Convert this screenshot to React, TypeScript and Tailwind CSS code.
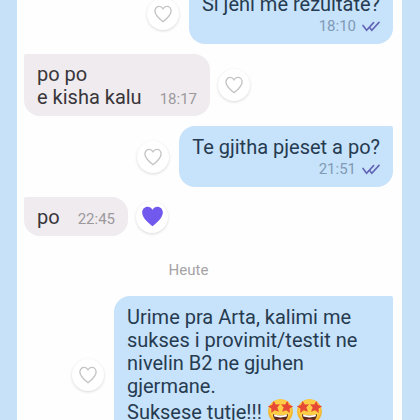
import type { ReactNode } from 'react';

const HEART =
  'M12 20.5C10.4 19.1 3 14 3 8.6 3 5.6 5.2 3.6 7.7 3.6c1.8 0 3.4 1 4.3 2.6.9-1.6 2.5-2.6 4.3-2.6C18.8 3.6 21 5.6 21 8.6c0 5.4-7.4 10.5-9 11.9z';

function LikeButton({ liked = false }: { liked?: boolean }) {
  return (
    <button
      type="button"
      aria-label="Like"
      aria-pressed={liked}
      className="flex size-8 shrink-0 items-center justify-center rounded-full bg-white shadow-[0_1px_3px_rgba(0,0,0,0.15)]"
    >
      {liked ? (
        <svg viewBox="2 2 20 20" className="size-[23px]" fill="#7259ee" aria-hidden="true">
          <path d={HEART} />
        </svg>
      ) : (
        <svg viewBox="2 2 20 20" className="size-[18px]" fill="none" stroke="#c4c2c5" strokeWidth="1.5" aria-hidden="true">
          <path d={HEART} />
        </svg>
      )}
    </button>
  );
}

function SeenTicks() {
  return (
    <svg viewBox="0 0 18 11" className="h-[11px] w-[18px]" fill="none" stroke="#6264b5" strokeWidth="1.6" strokeLinecap="round" aria-hidden="true">
      <path d="M1 4.4 4.6 9.2 11.6 1.6" />
      <path d="M7.6 6.6 9.8 9.2 17 1.4" />
    </svg>
  );
}

function StarFace() {
  return (
    <svg viewBox="0 0 28 28" className="inline-block size-[27px] align-[-6px]" role="img" aria-label="Star-struck">
      <circle cx="14" cy="14" r="12.8" fill="#f5b52c" />
      <circle cx="14" cy="12.8" r="11.4" fill="#fdce45" />
      <path d="M6.2 16.8c4.8 1.7 10.8 1.7 15.6 0 .2 4.6-3.2 8-7.8 8s-8-3.4-7.8-8z" fill="#5b2b20" />
      <path d="M7.2 17.1c4.3 1.3 9.3 1.3 13.6 0l-.4 2.2c-4.2 1.1-8.6 1.1-12.8 0z" fill="#fff" />
      <path d="M9.8 23.2c2-2 6.4-2 8.4 0-2.3 1.7-6.1 1.7-8.4 0z" fill="#e35d4f" />
      <path d="m7 3 2.1 3.7 4.4-.3-2.8 3.5 1.7 4.3-4.3-1.4-3.6 2.8v-4.6L.8 8.5l4.4-1.2z" fill="#e64a35" />
      <path d="m21 3-2.1 3.7-4.4-.3 2.8 3.5-1.7 4.3 4.3-1.4 3.6 2.8v-4.6l3.7-2.5-4.4-1.2z" fill="#e64a35" />
    </svg>
  );
}

function Received({ time, liked, children }: { time: string; liked?: boolean; children: ReactNode }) {
  return (
    <article className="flex items-center gap-2">
      <div className="flex items-end gap-[18px] rounded-2xl rounded-tl-xs bg-[#efebee] px-[13px] pt-[9px] pb-[7px] text-[#39363b]">
        <p>{children}</p>
        <time className="text-[15px] leading-5 text-[#9c999d]">{time}</time>
      </div>
      <LikeButton liked={liked} />
    </article>
  );
}

function Sent({ time, children }: { time?: string; children: ReactNode }) {
  return (
    <article className="flex items-center justify-end gap-[10px]">
      <LikeButton />
      <div className="max-w-[279px] rounded-2xl rounded-tr-xs bg-[#c7e2fb] px-[13px] pt-[10px] pb-2 text-[#263b50]">
        <p>{children}</p>
        <div className="flex h-5 items-center justify-end gap-[6px] text-[15px] leading-5 text-[#7f9ab5]">
          {time && <time>{time}</time>}
          <SeenTicks />
        </div>
      </div>
    </article>
  );
}

export default function App() {
  return (
    <div className="h-screen overflow-hidden bg-[#c7e2f8] pr-[18px] pl-[17px] font-['Roboto',sans-serif] text-[20px] leading-[23px]">
      <main className="h-full overflow-hidden bg-[#fefefe] pr-[9px] pl-[7px]">
        <div className="-mt-[17px] flex flex-col gap-[10px]">
          <Sent time="18:10">Si jeni me rezultate?</Sent>
          <Received time="18:17">
            po po
            <br />e kisha kalu
          </Received>
          <Sent time="21:51">Te gjitha pjeset a po?</Sent>
          <Received time="22:45" liked>
            po
          </Received>
          <h2 className="pt-[14px] pr-10 pb-[6px] text-center text-[15px] leading-5 text-[#a5a3a6]">Heute</h2>
          <Sent>
            Urime pra Arta, kalimi me sukses i provimit/testit ne nivelin B2 ne gjuhen gjermane.
            <br />
            Suksese tutje!!! <StarFace />
            <span className="ml-[2px]">
              <StarFace />
            </span>
          </Sent>
        </div>
      </main>
    </div>
  );
}
